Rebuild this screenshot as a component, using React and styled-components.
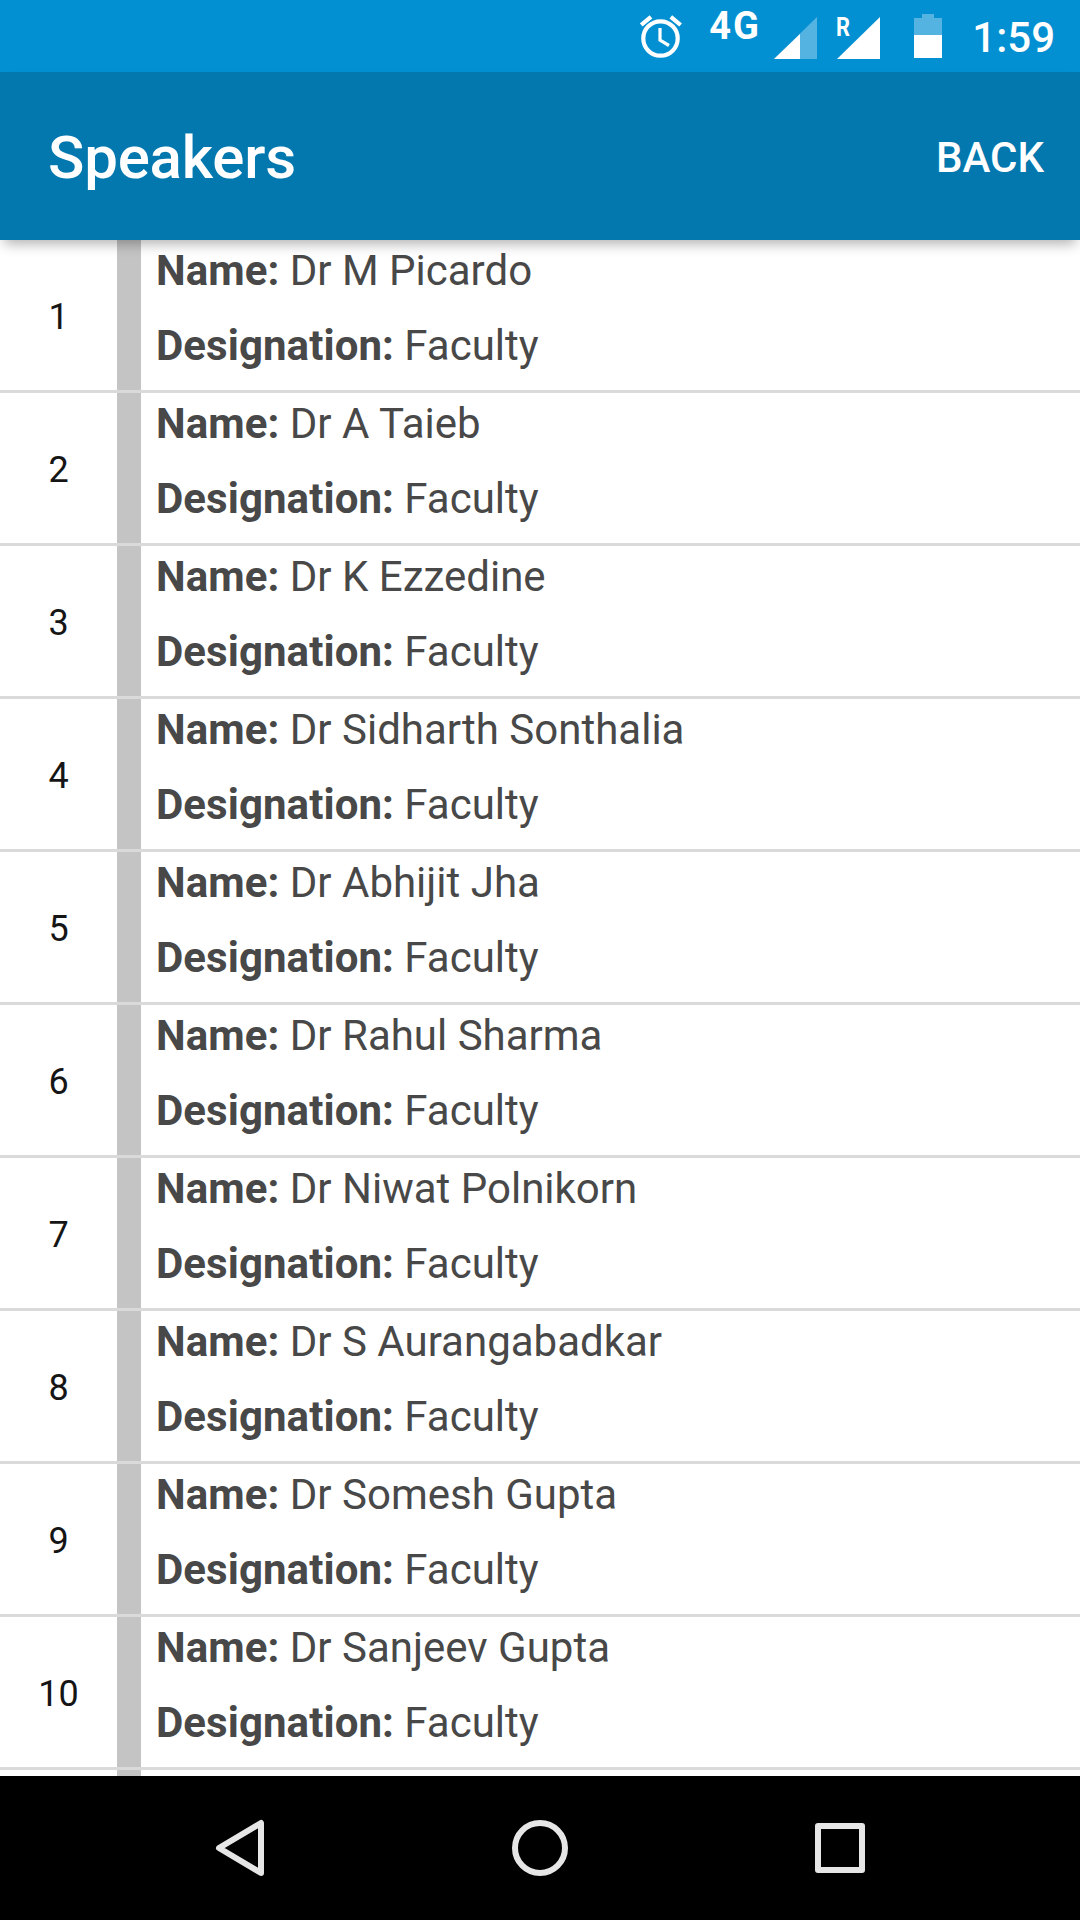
import React from 'react';
import styled, { createGlobalStyle } from 'styled-components';

const GlobalStyle = createGlobalStyle`
    body {
        margin: 0;
        background: #fff;
        font-family: Roboto, sans-serif;
    }
`;

const Screen = styled.div`
    display: flex;
    flex-direction: column;
    width: 1080px;
    height: 1920px;
    overflow: hidden;
    background: #fff;
`;

const StatusBar = styled.div`
    display: flex;
    flex: none;
    justify-content: flex-end;
    box-sizing: border-box;
    height: 72px;
    padding-right: 25px;
    color: #fff;
    background: #0390d2;
`;

const StatusIcon = styled.svg`
    display: block;
    flex: none;
    height: 72px;
    width: ${props => props.$width}px;
    margin-left: ${props => props.$gap || 0}px;
`;

const Network = styled.span`
    width: 52px;
    margin-left: 27px;
    font-size: 38px;
    font-weight: 700;
    line-height: 52px;
    letter-spacing: 2px;
`;

const Clock = styled.span`
    margin-left: 30px;
    font-size: 42px;
    font-weight: 500;
    line-height: 75px;
`;

const AppBar = styled.header`
    display: flex;
    flex: none;
    align-items: center;
    justify-content: space-between;
    box-sizing: border-box;
    height: 168px;
    padding: 4px 36px 0 48px;
    position: relative;
    z-index: 1;
    color: #fff;
    background: #0278af;
    box-shadow: 0 8px 12px -4px rgba(0, 0, 0, 0.3);
`;

const Title = styled.h1`
    margin: 0;
    font-size: 60px;
    font-weight: 500;
    line-height: 70px;
    letter-spacing: -0.2px;
`;

const BackButton = styled.button`
    padding: 0;
    border: 0;
    color: inherit;
    background: none;
    font-family: inherit;
    font-size: 42px;
    font-weight: 500;
    line-height: 50px;
`;

const List = styled.ul`
    flex: 1;
    min-height: 0;
    margin: 0;
    padding: 0;
    overflow: hidden;
    list-style: none;
`;

const Row = styled.li`
    display: flex;
    box-sizing: border-box;
    height: 153px;
    border-bottom: 3px solid #dadada;
`;

const Index = styled.div`
    width: 117px;
    color: #151515;
    font-size: 36px;
    line-height: 154px;
    text-align: center;
`;

const Stripe = styled.div`
    width: 24px;
    background: #c4c4c4;
`;

const Info = styled.div`
    padding: 1px 0 0 15px;
`;

const Line = styled.p`
    margin: 0 0 15px;
    color: #484848;
    font-size: 42px;
    line-height: 60px;
    white-space: nowrap;
`;

const Label = styled.b`
    letter-spacing: 0.07px;
`;

const NavBar = styled.nav`
    display: flex;
    flex: none;
    align-items: center;
    justify-content: center;
    gap: 240px;
    height: 144px;
    background: #000;
`;

const NavIcon = styled.svg`
    display: block;
    width: 60px;
    height: 60px;
    fill: none;
    stroke: #e6e6e6;
    stroke-width: 6;
    stroke-linejoin: round;
`;

const speakers = [
    'Dr M Picardo',
    'Dr A Taieb',
    'Dr K Ezzedine',
    'Dr Sidharth Sonthalia',
    'Dr Abhijit Jha',
    'Dr Rahul Sharma',
    'Dr Niwat Polnikorn',
    'Dr S Aurangabadkar',
    'Dr Somesh Gupta',
    'Dr Sanjeev Gupta',
];

const Speaker = ({ number, name }) => (
    <Row>
        <Index>{number}</Index>
        <Stripe />
        <Info>
            <Line><Label>Name:</Label> {name}</Line>
            <Line><Label>Designation:</Label> Faculty</Line>
        </Info>
    </Row>
);

const App = () => (
    <Screen>
        <GlobalStyle />
        <StatusBar>
            <StatusIcon $width={42} viewBox="0 0 42 72" fill="none" stroke="#fff">
                <circle cx="20.5" cy="38.5" r="17.2" strokeWidth="4.2" />
                <path d="M20 28v12.2l9 5.3" strokeWidth="3.2" />
                <path d="M1.2 25L11 16.8M30.8 16.8L40.6 25" strokeWidth="4.2" />
            </StatusIcon>
            <Network>4G</Network>
            <StatusIcon $width={43} $gap={13} viewBox="0 0 43 72" fill="#fff">
                <path d="M43 17v42H0z" opacity=".32" />
                <path d="M26 34v25H0z" />
            </StatusIcon>
            <StatusIcon $width={43} $gap={20} viewBox="0 0 43 72" fill="#fff">
                <text x="-1" y="35.5" fontSize="25" fontWeight="700" textLength="14" lengthAdjust="spacingAndGlyphs">R</text>
                <path d="M43 17v42H0z" />
            </StatusIcon>
            <StatusIcon $width={28} $gap={34} viewBox="0 0 28 72" fill="#fff">
                <path d="M8 14h12v4h8v17H0V18h8z" opacity=".32" />
                <path d="M0 35h28v23H0z" />
            </StatusIcon>
            <Clock>1:59</Clock>
        </StatusBar>
        <AppBar>
            <Title>Speakers</Title>
            <BackButton>BACK</BackButton>
        </AppBar>
        <List>
            {speakers.map((name, index) => (
                <Speaker key={name} number={index + 1} name={name} />
            ))}
            <Row>
                <Index />
                <Stripe />
            </Row>
        </List>
        <NavBar>
            <NavIcon viewBox="0 0 60 60">
                <path d="M51 5v50L9 30z" />
            </NavIcon>
            <NavIcon viewBox="0 0 60 60">
                <circle cx="30" cy="30" r="25" />
            </NavIcon>
            <NavIcon viewBox="0 0 60 60">
                <rect x="8" y="8" width="44" height="44" />
            </NavIcon>
        </NavBar>
    </Screen>
);

export default App;
